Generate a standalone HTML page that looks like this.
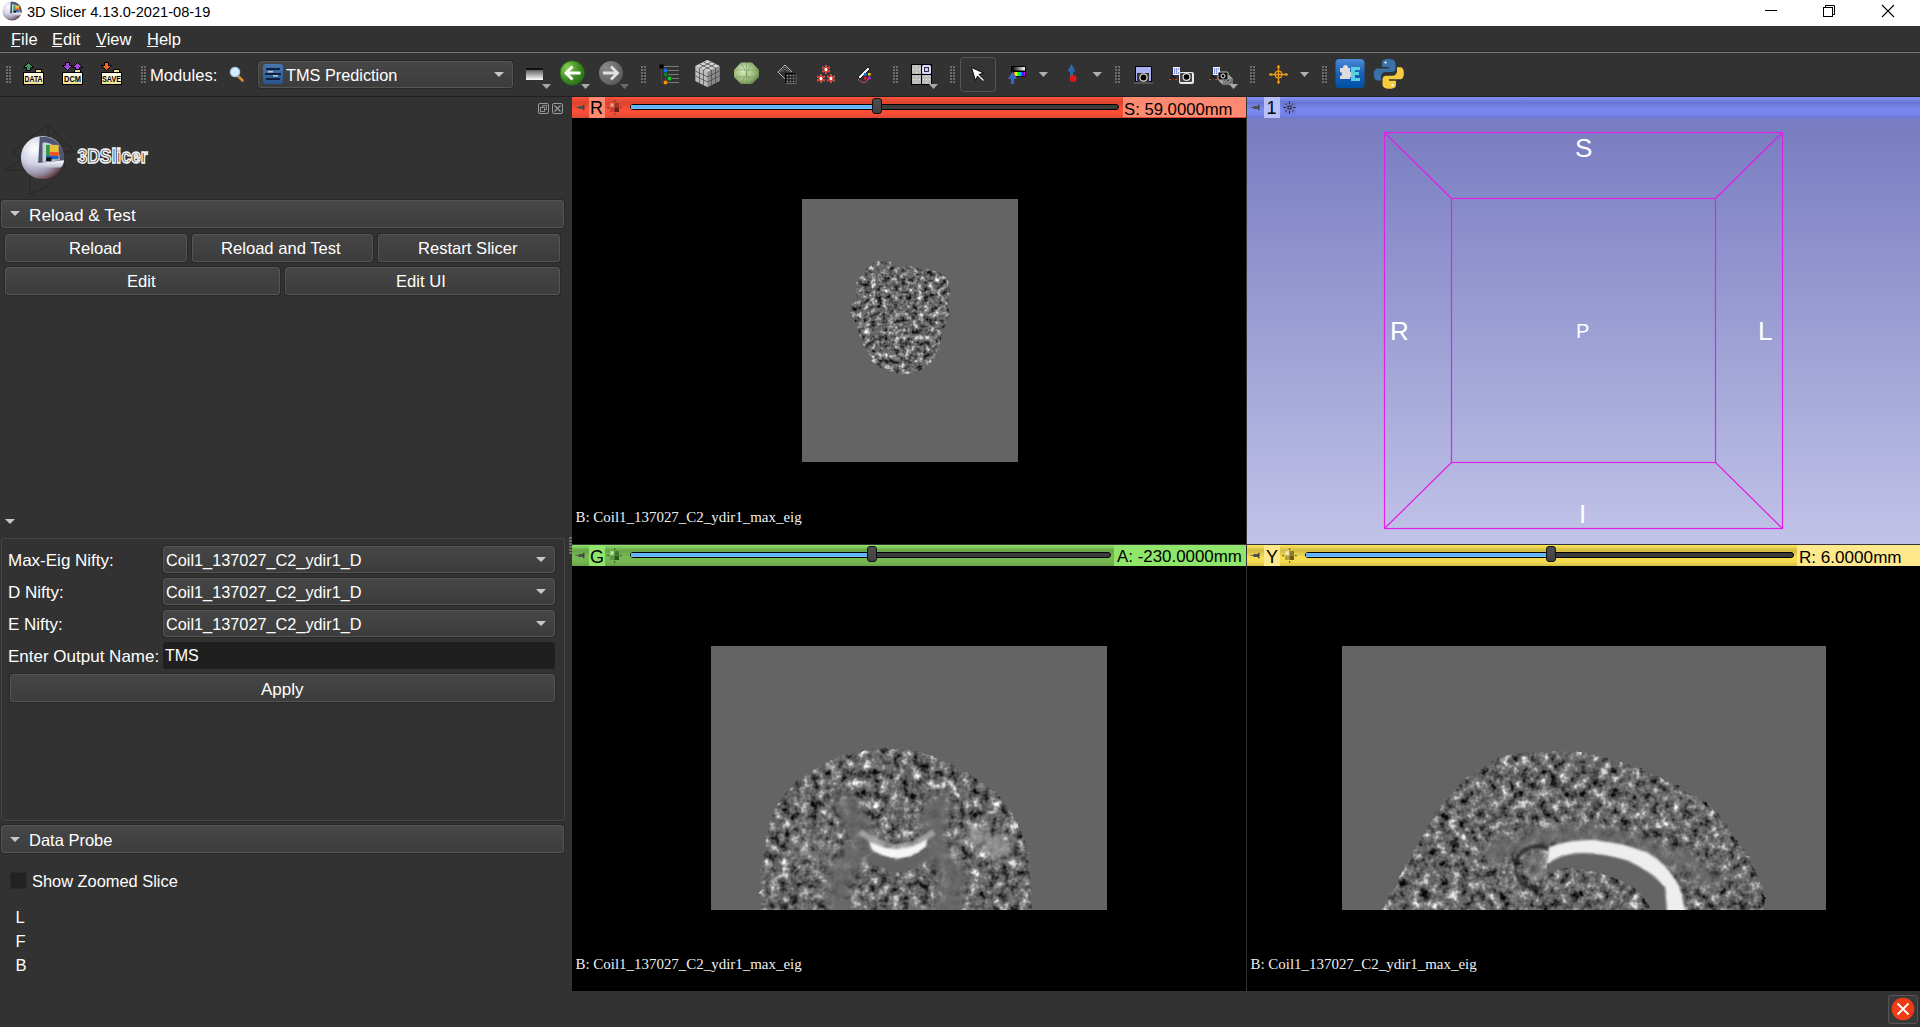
<!DOCTYPE html>
<html><head><meta charset="utf-8">
<style>
*{box-sizing:border-box;margin:0;padding:0}
html,body{width:1920px;height:1027px;overflow:hidden;background:#323232;font-family:"Liberation Sans",sans-serif;color:#fff}
.a{position:absolute}
.t{position:absolute;white-space:pre;line-height:1}
#title{left:0;top:0;width:1920px;height:26px;background:#fff}
#menu{left:0;top:26px;width:1920px;height:26px;background:#323232}
#tbline{left:0;top:52px;width:1920px;height:1px;background:#7c7c7c;box-shadow:0 -1px 0 #282828}
#toolbar{left:0;top:53px;width:1920px;height:44px;background:#323232}
.grip{position:absolute;width:6px;height:17px;background-image:radial-gradient(circle,#6a6a6a 1px,transparent 1.3px);background-size:3px 3px}
.btn{position:absolute;border:1px solid #555;border-radius:3px;box-shadow:0 0 0 1px #282828;background:linear-gradient(#464646,#3c3c3c);color:#fff;font-size:16px;text-align:center}
.hdr{position:absolute;border:1px solid #555;border-radius:3px;box-shadow:0 0 0 1px #282828;background:linear-gradient(#474747,#3d3d3d)}
.combo{position:absolute;border:1px solid #555;border-radius:3px;box-shadow:0 0 0 1px #282828;background:linear-gradient(#464646,#3c3c3c)}
.tri{position:absolute;width:0;height:0;border-left:5px solid transparent;border-right:5px solid transparent;border-top:5px solid #c8c8c8}

.bar{position:absolute;height:21px}
.red{background:linear-gradient(#ff5339 0px,#dc4630 5px,#dd4731 7px,#ff4f38 12px,#fa4d37 17px,#d44a30 21px)}
.grn{background:linear-gradient(#90e66a 0px,#6ba74b 5px,#6ca94b 7px,#78ba53 12px,#76b652 17px,#68a34a 21px)}
.yel{background:linear-gradient(#fde65c 0px,#d6be46 5px,#d8c047 7px,#f6dd52 12px,#f3da50 17px,#d2bc47 21px)}
.blu{background:linear-gradient(#8294fa 0px,#6b77d6 5px,#6c79d8 7px,#7a89ef 12px,#7786ec 17px,#6a77d4 21px)}
.lbl{position:absolute;top:0;height:21px;width:16px}
.trk{position:absolute;top:7px;height:6px;border:1px solid #000;border-radius:3px;background:#3c3c3c}
.fill{position:absolute;top:8px;height:4px;background:linear-gradient(#68bcff,#5aaef8 60%,#86ccff)}
.hdl{position:absolute;top:1px;width:10px;height:16px;border:1px solid #111;border-radius:3px;background:linear-gradient(#505050,#404040)}
.val{position:absolute;color:#000;font-size:16.4px}
.vt{position:absolute;white-space:pre;line-height:1;font-family:"Liberation Serif",serif;font-size:14.8px;color:#f0f0f0}
.gray{position:absolute;background:#646464}
.ser{font-family:"Liberation Serif",serif}
</style></head><body>
<!-- title bar -->
<div id="title" class="a"></div>

<svg width="0" height="0" style="position:absolute">
<defs>
<radialGradient id="sg" cx="0.32" cy="0.3" r="0.78"><stop offset="0" stop-color="#ffffff"/><stop offset="0.45" stop-color="#d0d2e6"/><stop offset="0.75" stop-color="#9a92a8"/><stop offset="1" stop-color="#5a3434"/></radialGradient>
<linearGradient id="plate" x1="0" y1="0" x2="0" y2="1"><stop offset="0" stop-color="#ffffff"/><stop offset="1" stop-color="#b8bcd0"/></linearGradient>
<symbol id="sph3d" viewBox="0 0 100 100">
<circle cx="50" cy="50" r="48" fill="url(#sg)"/>
<path d="M44 4A48 48 0 0 1 98 50L98 60L40 66Z" fill="#4e5674"/>
<path d="M54 16A36 36 0 0 1 88 50V56L50 60V18Z" fill="#c8d0dc"/>
<path d="M58 22H86V54H58Z" fill="#e8c040"/>
<path d="M58 22H66V54H58Z" fill="#2a9a4a"/>
<path d="M66 38H86V46H66Z" fill="#f05020"/>
<path d="M58 46H86V54H58Z" fill="#1a60c0"/>
<path d="M58 50H70V58H58Z" fill="#111"/>
<path d="M40 62L98 56Q96 70 90 72L38 72Z" fill="url(#plate)"/>
</symbol>
</defs>
</svg>
<svg class="a" style="left:2px;top:1px" width="20" height="20"><use href="#sph3d"/></svg>
<div class="t" style="left:27px;top:5px;font-size:14.6px;color:#000">3D Slicer 4.13.0-2021-08-19</div>
<div class="a" style="left:1765px;top:10px;width:12px;height:1px;background:#000"></div>
<svg class="a" style="left:1820px;top:3px" width="18" height="18"><rect x="3.5" y="4.5" width="9" height="9" fill="none" stroke="#000"/><path d="M5.5 4.5V2.5h9v9h-2" fill="none" stroke="#000"/></svg>
<svg class="a" style="left:1880px;top:3px" width="16" height="16"><path d="M2 2L14 14M14 2L2 14" stroke="#000" stroke-width="1.1"/></svg>
<!-- menu -->
<div id="menu" class="a"></div>
<div class="t" style="left:11px;top:31px;font-size:16.5px">File</div>
<div class="t" style="left:52px;top:31px;font-size:16.5px">Edit</div>
<div class="t" style="left:96px;top:31px;font-size:16.5px">View</div>
<div class="t" style="left:147px;top:31px;font-size:16.5px">Help</div>
<div class="a" style="left:11px;top:46px;width:9px;height:1px;background:#fff"></div>
<div class="a" style="left:52px;top:46px;width:10px;height:1px;background:#fff"></div>
<div class="a" style="left:96px;top:46px;width:10px;height:1px;background:#fff"></div>
<div class="a" style="left:147px;top:46px;width:11px;height:1px;background:#fff"></div>
<div id="tbline" class="a"></div>
<div id="toolbar" class="a"></div>
<div class="a" style="left:0;top:96px;width:1920px;height:1px;background:#202020"></div>
<!--TOOLBAR-->

<div class="t" style="left:150px;top:67.5px;font-size:16.6px">Modules:</div>
<div class="combo" style="left:258px;top:61px;width:255px;height:27px"></div>
<svg class="a" style="left:263px;top:64px" width="20" height="20"><defs><linearGradient id="cmb" x1="0" y1="0" x2="0" y2="1"><stop offset="0" stop-color="#4676ae"/><stop offset="1" stop-color="#28558e"/></linearGradient></defs><rect width="20" height="20" rx="3" fill="url(#cmb)"/>
<g fill="#10203a"><rect x="3" y="4" width="14" height="2"/><rect x="2" y="9" width="16" height="2"/><rect x="3" y="14" width="14" height="2"/></g>
<g fill="#c8e8f0" opacity="0.8"><rect x="5" y="7" width="5" height="1.5"/><rect x="10" y="11" width="5" height="1.5"/></g></svg>
<div class="t" style="left:286px;top:67px;font-size:16.3px">TMS Prediction</div>
<div class="tri" style="left:494px;top:72px"></div>
<svg class="a" style="left:0;top:0" width="1420" height="97" viewBox="0 0 1420 97">
<defs>
<pattern id="grip" x="0" y="66" width="3" height="3" patternUnits="userSpaceOnUse"><rect width="2" height="2" fill="#6c6c6c"/></pattern>
<linearGradient id="fold" x1="0" y1="0" x2="0" y2="1"><stop offset="0" stop-color="#fffde8"/><stop offset="0.6" stop-color="#fbf2c8"/><stop offset="1" stop-color="#eed880"/></linearGradient>
<radialGradient id="grn" cx="0.3" cy="0.3" r="0.8"><stop offset="0" stop-color="#8cd050"/><stop offset="0.6" stop-color="#3f8a24"/><stop offset="1" stop-color="#2d6e18"/></radialGradient>
<radialGradient id="gry" cx="0.3" cy="0.3" r="0.8"><stop offset="0" stop-color="#9a9a9a"/><stop offset="1" stop-color="#5e5e5e"/></radialGradient>
<linearGradient id="ext" x1="0" y1="0" x2="0" y2="1"><stop offset="0" stop-color="#4a8ad8"/><stop offset="0.5" stop-color="#1a62b8"/><stop offset="1" stop-color="#0050a4"/></linearGradient>
<linearGradient id="gbar" x1="0" y1="0" x2="0" y2="1"><stop offset="0" stop-color="#111"/><stop offset="0.15" stop-color="#111"/><stop offset="0.2" stop-color="#666"/><stop offset="1" stop-color="#fff"/></linearGradient>
<radialGradient id="sph" cx="0.4" cy="0.4" r="0.7"><stop offset="0" stop-color="#d8f0c0"/><stop offset="0.7" stop-color="#8fb070"/><stop offset="1" stop-color="#5f7a48"/></radialGradient>
<radialGradient id="cube" cx="0.5" cy="0.4" r="0.7"><stop offset="0" stop-color="#e8e8e8"/><stop offset="1" stop-color="#707070"/></radialGradient>
</defs>
<!-- grips -->

<g fill="#6c6c6c" id="grips"><rect x="6" y="66" width="2" height="2"/><rect x="9" y="66" width="2" height="2"/><rect x="6" y="69" width="2" height="2"/><rect x="9" y="69" width="2" height="2"/><rect x="6" y="72" width="2" height="2"/><rect x="9" y="72" width="2" height="2"/><rect x="6" y="75" width="2" height="2"/><rect x="9" y="75" width="2" height="2"/><rect x="6" y="78" width="2" height="2"/><rect x="9" y="78" width="2" height="2"/><rect x="6" y="81" width="2" height="2"/><rect x="9" y="81" width="2" height="2"/><rect x="141" y="66" width="2" height="2"/><rect x="144" y="66" width="2" height="2"/><rect x="141" y="69" width="2" height="2"/><rect x="144" y="69" width="2" height="2"/><rect x="141" y="72" width="2" height="2"/><rect x="144" y="72" width="2" height="2"/><rect x="141" y="75" width="2" height="2"/><rect x="144" y="75" width="2" height="2"/><rect x="141" y="78" width="2" height="2"/><rect x="144" y="78" width="2" height="2"/><rect x="141" y="81" width="2" height="2"/><rect x="144" y="81" width="2" height="2"/><rect x="641" y="66" width="2" height="2"/><rect x="644" y="66" width="2" height="2"/><rect x="641" y="69" width="2" height="2"/><rect x="644" y="69" width="2" height="2"/><rect x="641" y="72" width="2" height="2"/><rect x="644" y="72" width="2" height="2"/><rect x="641" y="75" width="2" height="2"/><rect x="644" y="75" width="2" height="2"/><rect x="641" y="78" width="2" height="2"/><rect x="644" y="78" width="2" height="2"/><rect x="641" y="81" width="2" height="2"/><rect x="644" y="81" width="2" height="2"/><rect x="893" y="66" width="2" height="2"/><rect x="896" y="66" width="2" height="2"/><rect x="893" y="69" width="2" height="2"/><rect x="896" y="69" width="2" height="2"/><rect x="893" y="72" width="2" height="2"/><rect x="896" y="72" width="2" height="2"/><rect x="893" y="75" width="2" height="2"/><rect x="896" y="75" width="2" height="2"/><rect x="893" y="78" width="2" height="2"/><rect x="896" y="78" width="2" height="2"/><rect x="893" y="81" width="2" height="2"/><rect x="896" y="81" width="2" height="2"/><rect x="950" y="66" width="2" height="2"/><rect x="953" y="66" width="2" height="2"/><rect x="950" y="69" width="2" height="2"/><rect x="953" y="69" width="2" height="2"/><rect x="950" y="72" width="2" height="2"/><rect x="953" y="72" width="2" height="2"/><rect x="950" y="75" width="2" height="2"/><rect x="953" y="75" width="2" height="2"/><rect x="950" y="78" width="2" height="2"/><rect x="953" y="78" width="2" height="2"/><rect x="950" y="81" width="2" height="2"/><rect x="953" y="81" width="2" height="2"/><rect x="1115" y="66" width="2" height="2"/><rect x="1118" y="66" width="2" height="2"/><rect x="1115" y="69" width="2" height="2"/><rect x="1118" y="69" width="2" height="2"/><rect x="1115" y="72" width="2" height="2"/><rect x="1118" y="72" width="2" height="2"/><rect x="1115" y="75" width="2" height="2"/><rect x="1118" y="75" width="2" height="2"/><rect x="1115" y="78" width="2" height="2"/><rect x="1118" y="78" width="2" height="2"/><rect x="1115" y="81" width="2" height="2"/><rect x="1118" y="81" width="2" height="2"/><rect x="1250" y="66" width="2" height="2"/><rect x="1253" y="66" width="2" height="2"/><rect x="1250" y="69" width="2" height="2"/><rect x="1253" y="69" width="2" height="2"/><rect x="1250" y="72" width="2" height="2"/><rect x="1253" y="72" width="2" height="2"/><rect x="1250" y="75" width="2" height="2"/><rect x="1253" y="75" width="2" height="2"/><rect x="1250" y="78" width="2" height="2"/><rect x="1253" y="78" width="2" height="2"/><rect x="1250" y="81" width="2" height="2"/><rect x="1253" y="81" width="2" height="2"/><rect x="1322" y="66" width="2" height="2"/><rect x="1325" y="66" width="2" height="2"/><rect x="1322" y="69" width="2" height="2"/><rect x="1325" y="69" width="2" height="2"/><rect x="1322" y="72" width="2" height="2"/><rect x="1325" y="72" width="2" height="2"/><rect x="1322" y="75" width="2" height="2"/><rect x="1325" y="75" width="2" height="2"/><rect x="1322" y="78" width="2" height="2"/><rect x="1325" y="78" width="2" height="2"/><rect x="1322" y="81" width="2" height="2"/><rect x="1325" y="81" width="2" height="2"/></g>
<!-- DATA -->
<g stroke="#000" stroke-width="1">
<path d="M28.5 62.5L23.5 67.5H26.5V70.5H30.5V67.5H33.5Z" fill="#3a9a5a"/>
<path d="M35.5 72.5V69.5H41.5V72.5" fill="#f2e2a0"/>
<rect x="23.5" y="72.5" width="20" height="12" fill="url(#fold)"/>
</g>
<text x="24.5" y="82" font-family="Liberation Sans" font-weight="bold" font-size="9" fill="#000" textLength="18" lengthAdjust="spacingAndGlyphs">DATA</text>
<!-- DCM -->
<g stroke="#000" stroke-width="1">
<path d="M67.5 70.5L62.5 65.5H65.5V62.5H69.5V65.5H72.5Z" fill="#a648d8"/>
<path d="M77.5 62.5L72.5 67.5H75.5V70.5H79.5V67.5H82.5Z" fill="#a648d8"/>
<path d="M74.5 72.5V69.5H80.5V72.5" fill="#f2e2a0"/>
<rect x="62.5" y="72.5" width="20" height="12" fill="url(#fold)"/>
</g>
<text x="64" y="82" font-family="Liberation Sans" font-weight="bold" font-size="9" fill="#000" textLength="17" lengthAdjust="spacingAndGlyphs">DCM</text>
<!-- SAVE -->
<g stroke="#000" stroke-width="1">
<path d="M106.5 70.5L101.5 65.5H104.5V62.5H108.5V65.5H111.5Z" fill="#ee6420"/>
<path d="M113.5 72.5V69.5H119.5V72.5" fill="#f2e2a0"/>
<rect x="101.5" y="72.5" width="20" height="12" fill="url(#fold)"/>
</g>
<text x="102" y="82" font-family="Liberation Sans" font-weight="bold" font-size="9" fill="#000" textLength="19" lengthAdjust="spacingAndGlyphs">SAVE</text>
<!-- magnifier -->
<path d="M238.5 76.5L242.5 80.5" stroke="#d08a3a" stroke-width="2.6" stroke-linecap="round"/>
<circle cx="235" cy="72" r="4.6" fill="#d8ecff" stroke="#9cc8f0" stroke-width="1.4"/>
<!-- gradient bars icon -->
<rect x="526" y="68" width="17" height="12" fill="url(#gbar)"/>
<path d="M542 84H551L546.5 89Z" fill="#a8a8a8"/>
<!-- green back -->
<circle cx="572.3" cy="73" r="12.3" fill="url(#grn)" stroke="#1f5a10" stroke-width="0.8"/>
<path d="M564 73L571.5 65.5L573.5 67.5L569.5 71.5H580.5V74.5H569.5L573.5 78.5L571.5 80.5Z" fill="#fff"/>
<path d="M581 84H590L585.5 89Z" fill="#a8a8a8"/>
<!-- gray forward -->
<circle cx="611" cy="73" r="12" fill="url(#gry)" opacity="0.85"/>
<path d="M619.5 73L612 65.5L610 67.5L614 71.5H603V74.5H614L610 78.5L612 80.5Z" fill="#e0e0e0"/>
<path d="M620 84H629L624.5 89Z" fill="#6a6a6a"/>
<!-- data tree -->
<g stroke="#7a7a7a" stroke-width="1">
<path d="M664 66.5H679M668 70.5H679M668 74.5H679M672 78.5H679M668 82.5H679"/>
<path d="M661.5 68V83M665.5 77V80" stroke="#444"/>
</g>
<rect x="660" y="65" width="3" height="3" fill="#000" stroke="#000"/>
<rect x="664" y="69" width="3" height="3" fill="#1478f0" stroke="#1a6ee0" stroke-width="0.6"/>
<rect x="664" y="73" width="3" height="3" fill="#0a8a1a" stroke="#0a7a14" stroke-width="0.6"/>
<rect x="668" y="77" width="3" height="3" fill="#18d028" stroke="#10b020" stroke-width="0.6"/>
<rect x="664" y="81" width="3" height="3" fill="#ff9a10" stroke="#f08a00" stroke-width="0.6"/>
<!-- cube -->
<g>
<path d="M707.5 60L719.5 66V81L707.5 87L695.5 81V66Z" fill="#9a9a9a"/>
<path d="M707.5 60L719.5 66L707.5 72L695.5 66Z" fill="#d0d0d0"/>
<path d="M695.5 66L707.5 72V87L695.5 81Z" fill="#bcbcbc"/>
<path d="M707.5 72L719.5 66V81L707.5 87Z" fill="#8a8a8a"/>
<g stroke="#444" stroke-width="0.7" fill="none">
<path d="M699.5 64L711.5 70M703.5 62L715.5 68M711.5 62L699.5 68M715.5 64L703.5 70"/>
<path d="M699.5 68V83M703.5 70V85M711.5 70V85M715.5 68V83"/>
<path d="M695.5 71L707.5 77L719.5 71M695.5 76L707.5 82L719.5 76"/>
</g>
</g>
<!-- green sphere -->
<path d="M741 62.6H752L759 70V77L752 84H741L734 77V70Z" fill="url(#sph)"/>
<g stroke="#6a8a50" stroke-width="0.6" fill="none" opacity="0.8"><path d="M734 70H759M734 77H759M741 62.6L752 84M752 62.6L741 84M746.5 62.6V84"/></g>
<!-- volumes -->
<g fill="none" stroke="#c8c8c8" stroke-width="0.9">
<path d="M778 72L785 65L792 72"/>
<path d="M780 72L785 67L790 72M782 72L785 69L788 72" stroke="#888" stroke-width="0.6"/>
<path d="M778 72L785 79" />
</g>
<rect x="785" y="73" width="10.5" height="10" fill="#000"/>
<path d="M786 83.5H796V74" stroke="#777" fill="none" stroke-width="0.8"/>
<g fill="#8a8a8a"><rect x="786.5" y="74.5" width="2" height="2"/><rect x="789.5" y="74.5" width="2" height="2"/><rect x="792.5" y="74.5" width="2" height="2"/><rect x="786.5" y="77.5" width="2" height="2"/><rect x="789.5" y="77.5" width="2" height="2"/><rect x="792.5" y="77.5" width="2" height="2"/><rect x="786.5" y="80.5" width="2" height="2"/><rect x="789.5" y="80.5" width="2" height="2"/><rect x="792.5" y="80.5" width="2" height="2"/></g>
<!-- markups -->
<g stroke-width="1.6" stroke-linecap="butt">
<g id="ast1" transform="translate(826,69.5)"><path d="M0 -4V4M-3.6 -2.2L3.6 2.2M-3.6 2.2L3.6 -2.2" stroke="#fff"/><path d="M0 -4V-1.5M0 1.5V4M-3.6 -2.2L-1.3 -0.8M1.3 0.8L3.6 2.2M-3.6 2.2L-1.3 0.8M1.3 -0.8L3.6 -2.2" stroke="#e02010"/></g>
<g transform="translate(821,78.5)"><path d="M0 -4V4M-3.6 -2.2L3.6 2.2M-3.6 2.2L3.6 -2.2" stroke="#fff"/><path d="M0 -4V-1.5M0 1.5V4M-3.6 -2.2L-1.3 -0.8M1.3 0.8L3.6 2.2M-3.6 2.2L-1.3 0.8M1.3 -0.8L3.6 -2.2" stroke="#e02010"/></g>
<g transform="translate(831,78.5)"><path d="M0 -4V4M-3.6 -2.2L3.6 2.2M-3.6 2.2L3.6 -2.2" stroke="#fff"/><path d="M0 -4V-1.5M0 1.5V4M-3.6 -2.2L-1.3 -0.8M1.3 0.8L3.6 2.2M-3.6 2.2L-1.3 0.8M1.3 -0.8L3.6 -2.2" stroke="#e02010"/></g>
</g>
<!-- editor -->
<path d="M858 77L868 67L870 69L860 79Z" fill="#f0f0f0" stroke="#000" stroke-width="0.8"/>
<path d="M858 79Q862 84 866 82L868 79" fill="none" stroke="#e05080" stroke-width="0.8"/>
<rect x="864" y="73" width="2.6" height="2.6" fill="#1a70e0"/><rect x="868" y="73" width="2.6" height="2.6" fill="#f0c000"/>
<rect x="864" y="77" width="2.6" height="2.6" fill="#e02020"/><rect x="868" y="77" width="2.6" height="2.6" fill="#c020e0"/>
<!-- layout -->
<rect x="911" y="64" width="21" height="21" fill="#000"/>
<rect x="912" y="65" width="9" height="9" fill="#bdbdbd"/><rect x="922" y="65" width="9" height="9" rx="1.5" fill="#d8d8ff"/>
<rect x="912" y="75" width="9" height="9" fill="#bdbdbd"/><rect x="922" y="75" width="9" height="9" fill="#bdbdbd"/>
<rect x="924.5" y="67.5" width="4" height="4" fill="#c8c8f0" stroke="#222" stroke-width="0.9"/>
<g fill="#f0f0c0"><rect x="916" y="66" width="1" height="1"/><rect x="916" y="69" width="1" height="1"/><rect x="913" y="69" width="1" height="1"/><rect x="919" y="69" width="1" height="1"/><rect x="916" y="72" width="1" height="1"/><rect x="916" y="76" width="1" height="1"/><rect x="916" y="79" width="1" height="1"/><rect x="913" y="79" width="1" height="1"/><rect x="919" y="79" width="1" height="1"/><rect x="916" y="82" width="1" height="1"/><rect x="926" y="76" width="1" height="1"/><rect x="926" y="79" width="1" height="1"/><rect x="923" y="79" width="1" height="1"/><rect x="929" y="79" width="1" height="1"/><rect x="926" y="82" width="1" height="1"/></g>
<path d="M929 84H938L933.5 89Z" fill="#a8a8a8"/>
<!-- pointer -->
<rect x="960.5" y="57.5" width="35" height="34" rx="3" fill="#343434" stroke="#555"/>
<path d="M971.5 67.5L983.5 73L979 74.5L984.5 80L983 81.5L977.5 76L975.5 80.5Z" fill="#fff" stroke="#000" stroke-width="0.9"/>
<!-- window level -->
<rect x="1011" y="66" width="15" height="10.6" fill="#000"/>
<defs><linearGradient id="wl" x1="0" x2="1"><stop offset="0" stop-color="#000"/><stop offset="1" stop-color="#fff"/></linearGradient>
<linearGradient id="rb" x1="0" x2="1"><stop offset="0" stop-color="#ff8000"/><stop offset="0.2" stop-color="#ffff00"/><stop offset="0.4" stop-color="#00ff00"/><stop offset="0.6" stop-color="#00c0ff"/><stop offset="0.8" stop-color="#4000ff"/><stop offset="1" stop-color="#ff00ff"/></linearGradient></defs>
<rect x="1012" y="67" width="13" height="3.5" fill="url(#wl)"/>
<rect x="1014" y="72" width="11" height="4" fill="url(#rb)"/>
<path d="M1012.5 71L1008 79H1010.9V84H1014.1V79H1017Z" fill="#3a64c0"/>
<path d="M1038.75 72H1048L1043.4 77Z" fill="#b0b0b0"/>
<!-- pick -->
<path d="M1071.5 64L1067.5 71.5H1070V77H1073V71.5H1075.5Z" fill="#2a6aa8"/>
<circle cx="1073" cy="78.5" r="3.5" fill="#e01818"/>
<path d="M1092.5 72H1102L1097.2 77Z" fill="#b0b0b0"/>
<!-- screenshot -->
<rect x="1135" y="66" width="17" height="16" fill="#000"/>
<rect x="1136" y="67" width="15" height="14" fill="#aab0f2"/>
<rect x="1134" y="82" width="19" height="2" fill="#555"/>
<path d="M1137 73H1149V82H1137Z" fill="#333"/>
<circle cx="1143.5" cy="77.5" r="3.6" fill="#000" stroke="#ddd" stroke-width="1.3"/>
<!-- scene view -->
<rect x="1173" y="67" width="7" height="8" fill="#f0f0ff"/>
<g fill="#4060e0"><rect x="1174" y="68.5" width="1.2" height="1.2"/><rect x="1176" y="68.5" width="1.2" height="1.2"/><rect x="1178" y="68.5" width="1.2" height="1.2"/><rect x="1174" y="70.5" width="1.2" height="1.2"/><rect x="1176" y="70.5" width="1.2" height="1.2"/><rect x="1174" y="72.5" width="1.2" height="1.2"/><rect x="1176" y="72.5" width="1.2" height="1.2"/><rect x="1178" y="72.5" width="1.2" height="1.2"/></g>
<path d="M1169 79.5H1171M1175 79.5H1177" stroke="#e04010" stroke-width="1.2"/>
<path d="M1170 79L1173 75.5L1176 79" stroke="#000" fill="none" stroke-width="0.8"/>
<rect x="1179" y="72" width="15" height="12" rx="2" fill="#e8e8e8"/>
<rect x="1180" y="73" width="12" height="9" rx="1" fill="#444"/>
<circle cx="1186.5" cy="77" r="3.4" fill="#000" stroke="#ddd" stroke-width="1.2"/>
<!-- multi scene -->
<rect x="1213" y="67" width="7" height="8" fill="#f0f0ff"/>
<g fill="#4060e0"><rect x="1214" y="68.5" width="1.2" height="1.2"/><rect x="1216" y="68.5" width="1.2" height="1.2"/><rect x="1218" y="68.5" width="1.2" height="1.2"/><rect x="1214" y="70.5" width="1.2" height="1.2"/><rect x="1216" y="70.5" width="1.2" height="1.2"/><rect x="1214" y="72.5" width="1.2" height="1.2"/><rect x="1216" y="72.5" width="1.2" height="1.2"/></g>
<path d="M1209 79.5H1211M1215 79.5H1217" stroke="#e04010" stroke-width="1.2"/>
<path d="M1210 79L1213 75.5L1216 79" stroke="#000" fill="none" stroke-width="0.8"/>
<path d="M1222 78H1232V84H1222Z" fill="none" stroke="#bbb" stroke-width="1"/>
<path d="M1220 76H1230V82H1220Z" fill="none" stroke="#ccc" stroke-width="1"/>
<rect x="1218" y="72" width="10" height="8" rx="1" fill="#111" stroke="#ddd" stroke-width="0.8"/>
<circle cx="1223" cy="76" r="2" fill="#000" stroke="#eee" stroke-width="1"/>
<path d="M1229 84H1238L1233.5 89Z" fill="#a8a8a8"/>
<!-- crosshair -->
<g stroke="#f09a10" stroke-width="1.3" fill="none">
<path d="M1269 74.5H1288M1278.5 65V84"/>
<circle cx="1278.5" cy="74.5" r="3.4"/>
<path d="M1271 73V76M1286 73V76M1277 67H1280M1277 82H1280"/>
</g>
<path d="M1300 72H1309L1304.5 77Z" fill="#b0b0b0"/>
<!-- extensions -->
<rect x="1335.5" y="59" width="29" height="29" rx="4" fill="url(#ext)"/>
<path d="M1340 68H1343Q1343 65 1345.5 65Q1348 65 1348 68H1350V72Q1352.5 72 1352.5 74.5Q1352.5 77 1350 77V79H1340V76Q1342 76 1342 74Q1342 72 1340 72Z" fill="#dcdcdc"/>
<path d="M1351 67H1360V70H1355V72H1359V75H1355V78H1360V81H1351Z" fill="#5ad0e0"/>
<!-- python -->
<path d="M1388.5 59C1382 59 1382 61.5 1382 64V67H1389V68.5H1378C1375 68.5 1373.8 71 1373.8 74.5C1373.8 78 1375 80.5 1378 80.5H1381V76.5C1381 74 1383 72 1385.5 72H1392C1394 72 1395.5 70.5 1395.5 68.5V63.5C1395.5 61 1393.5 59 1388.5 59Z" fill="#3a72a8"/>
<path d="M1389.5 88.7C1396 88.7 1396 86.2 1396 83.7V80.7H1389V79.2H1400C1403 79.2 1403.8 76.7 1403.8 73.2C1403.8 69.7 1403 67.2 1400 67.2H1397V71.2C1397 73.7 1395 75.7 1392.5 75.7H1386C1384 75.7 1382.5 77.2 1382.5 79.2V84.2C1382.5 86.7 1384.5 88.7 1389.5 88.7Z" fill="#f6cc3e"/>
<circle cx="1385.5" cy="62.5" r="1.1" fill="#fff"/><circle cx="1392.5" cy="85.2" r="1.1" fill="#fff"/>
</svg>

<!--/TOOLBAR-->

<!-- left panel -->
<div class="a" id="leftpanel" style="left:0;top:97px;width:572px;height:894px;background:#323232"></div>

<svg class="a" style="left:0;top:97px" width="572" height="100" viewBox="0 97 572 100">
<g stroke="#262626" stroke-width="1" fill="none"><path d="M48 124L48 142M48 124L30 138L12 152L22 160L5 170L30 170L30 194L47 187L65 169L63 152L76 152L62 140L48 124"/></g>
<use href="#sph3d" x="20" y="135" width="45" height="45"/>
<text x="77.5" y="163" font-family="Liberation Sans" font-weight="bold" font-size="19.5" fill="#383838" stroke="#f4f4f4" stroke-width="1.5" textLength="70" lengthAdjust="spacingAndGlyphs">3DSlicer</text>
<g fill="none" stroke="#9a9a9a" stroke-width="1"><rect x="538.5" y="103.5" width="10" height="10" rx="1.5"/><rect x="552.5" y="103.5" width="10" height="10" rx="1.5"/><path d="M542.5 107.5V105.5H546.5V109.5H544.5" stroke-width="0.9"/><rect x="540.5" y="107.5" width="4" height="4" stroke-width="0.9"/><path d="M554.5 105.5L560.5 111.5M560.5 105.5L554.5 111.5" stroke-width="1.3"/></g>
</svg>
<div class="a" style="left:569px;top:537px;width:3px;height:17px;background-image:linear-gradient(#6a6a6a 2px,transparent 2px);background-size:3px 3px"></div>
<div class="hdr" style="left:1px;top:200px;width:563px;height:28px"></div>
<div class="tri" style="left:10px;top:211px"></div>
<div class="t" style="left:29px;top:207px;font-size:17.2px">Reload &amp; Test</div>
<div class="btn" style="left:5px;top:234px;width:182px;height:28px"></div>
<div class="btn" style="left:192px;top:234px;width:181px;height:28px"></div>
<div class="btn" style="left:378px;top:234px;width:182px;height:28px"></div>
<div class="btn" style="left:5px;top:267px;width:275px;height:28px"></div>
<div class="btn" style="left:285px;top:267px;width:275px;height:28px"></div>


<!-- left panel contents -->
<div class="t" style="left:69px;top:241px;font-size:16.6px">Reload</div>
<div class="t" style="left:221px;top:241px;font-size:16.6px">Reload and Test</div>
<div class="t" style="left:418px;top:241px;font-size:16.6px">Restart Slicer</div>
<div class="t" style="left:127px;top:274px;font-size:16.6px">Edit</div>
<div class="t" style="left:396px;top:274px;font-size:16.6px">Edit UI</div>
<div class="tri" style="left:5px;top:519px"></div>
<div class="a" style="left:1px;top:538px;width:564px;height:283px;border:1px solid #464646;border-radius:3px;box-shadow:0 1px 0 #2a2a2a"></div>
<div class="t" style="left:8px;top:552px;font-size:17px">Max-Eig Nifty:</div>
<div class="t" style="left:8px;top:584px;font-size:17px">D Nifty:</div>
<div class="t" style="left:8px;top:616px;font-size:17px">E Nifty:</div>
<div class="t" style="left:8px;top:648px;font-size:17px">Enter Output Name:</div>
<div class="combo" style="left:163px;top:546px;width:392px;height:27px"></div>
<div class="combo" style="left:163px;top:578px;width:392px;height:27px"></div>
<div class="combo" style="left:163px;top:610px;width:392px;height:27px"></div>
<div class="t" style="left:166px;top:552px;font-size:16.3px">Coil1_137027_C2_ydir1_D</div>
<div class="t" style="left:166px;top:584px;font-size:16.3px">Coil1_137027_C2_ydir1_D</div>
<div class="t" style="left:166px;top:616px;font-size:16.3px">Coil1_137027_C2_ydir1_D</div>
<div class="tri" style="left:536px;top:557px"></div>
<div class="tri" style="left:536px;top:589px"></div>
<div class="tri" style="left:536px;top:621px"></div>
<div class="a" style="left:163px;top:642px;width:392px;height:27px;background:#1f1f1f;border-radius:3px"></div>
<div class="t" style="left:165px;top:648px;font-size:16px">TMS</div>
<div class="btn" style="left:10px;top:674px;width:545px;height:28px"></div>
<div class="t" style="left:261px;top:681px;font-size:17px">Apply</div>
<div class="hdr" style="left:1px;top:825px;width:563px;height:28px"></div>
<div class="tri" style="left:10px;top:837px"></div>
<div class="t" style="left:29px;top:832px;font-size:16.5px">Data Probe</div>
<div class="a" style="left:10px;top:872px;width:17px;height:17px;background:#222;border:1px solid #2a2a2a"></div>
<div class="t" style="left:32px;top:873px;font-size:16.4px">Show Zoomed Slice</div>
<div class="t" style="left:15.5px;top:910px;font-size:16.6px">L</div>
<div class="t" style="left:15.5px;top:934px;font-size:16.6px">F</div>
<div class="t" style="left:15.5px;top:958px;font-size:16.6px">B</div>

<!-- views -->
<div class="a" style="left:572px;top:97px;width:674px;height:447px;background:#000"></div>
<div class="a" style="left:1247px;top:97px;width:673px;height:447px;background:linear-gradient(#7478be,#c1c3e8)"></div>
<div class="a" style="left:572px;top:545px;width:674px;height:446px;background:#000"></div>
<div class="a" style="left:1247px;top:545px;width:673px;height:446px;background:#000"></div>
<div class="a" style="left:1246px;top:97px;width:1px;height:894px;background:#333"></div>
<div class="a" style="left:572px;top:544px;width:1348px;height:1px;background:#333"></div>


<!-- red view bar -->
<div class="bar red" style="left:572px;top:97px;width:674px"></div>
<div class="lbl" style="left:589px;top:97px;background:#ff8a72"></div>
<div class="t" style="left:590px;top:99px;font-size:18px;color:#000">R</div>
<div class="trk" style="left:630px;top:104px;width:489px"></div>
<div class="fill" style="left:631px;top:105px;width:242px"></div>
<div class="hdl" style="left:872px;top:98px"></div>
<div class="a" style="left:1123px;top:97px;width:123px;height:20px;background:#ff8a72"></div>
<div class="t val" style="left:1124px;top:101.5px;font-size:16.7px">S: 59.0000mm</div>
<!-- blue 3D bar -->
<div class="bar blu" style="left:1247px;top:97px;width:673px"></div>
<div class="lbl" style="left:1264px;top:97px;background:#b8c0fa"></div>
<div class="t" style="left:1266.5px;top:99px;font-size:18px;color:#000">1</div>
<!-- green bar -->
<div class="bar grn" style="left:572px;top:545px;width:674px"></div>
<div class="lbl" style="left:589px;top:545px;background:#8fe66a"></div>
<div class="t" style="left:590px;top:548px;font-size:18px;color:#000">G</div>
<div class="trk" style="left:630px;top:552px;width:481px"></div>
<div class="fill" style="left:631px;top:553px;width:237px"></div>
<div class="hdl" style="left:867px;top:546px"></div>
<div class="a" style="left:1114px;top:545px;width:132px;height:21px;background:#8fe66a"></div>
<div class="t val" style="left:1117px;top:549px;font-size:16.9px">A: -230.0000mm</div>
<!-- yellow bar -->
<div class="bar yel" style="left:1247px;top:545px;width:673px"></div>
<div class="lbl" style="left:1264px;top:545px;background:#fde98c"></div>
<div class="t" style="left:1266px;top:548px;font-size:18px;color:#000">Y</div>
<div class="trk" style="left:1305px;top:552px;width:489px"></div>
<div class="fill" style="left:1306px;top:553px;width:241px"></div>
<div class="hdl" style="left:1546px;top:546px"></div>
<div class="a" style="left:1797px;top:545px;width:123px;height:21px;background:#fde98c"></div>
<div class="t val" style="left:1799px;top:548.5px;font-size:17.1px">R: 6.0000mm</div>
<svg class="a" style="left:0;top:0" width="1920" height="600" viewBox="0 0 1920 600"><path d="M575.5 107.5H579.0" stroke="#4a4a4a" stroke-width="0.8"/><path d="M578.5 106.0H583.0V109.0H578.5Z" fill="#4e4e4e"/><path d="M583.0 104.7H584.5V110.3H583.0Z" fill="#444"/><rect x="610" y="103" width="4.5" height="4.5" fill="#e2705c"/><rect x="614.5" y="103" width="4.5" height="4.5" fill="#a8301e"/><rect x="610" y="107.5" width="4.5" height="4.5" fill="#c84030"/><rect x="614.5" y="107.5" width="4.5" height="4.5" fill="#701c12"/><rect x="611.2" y="104" width="2" height="2" fill="#fff" opacity="0.45"/><g fill="#222"><rect x="614" y="100.5" width="1.2" height="1.2"/><rect x="614" y="113.3" width="1.2" height="1.2"/><rect x="607.5" y="107" width="1.2" height="1.2"/><rect x="620.3" y="107" width="1.2" height="1.2"/></g><path d="M575.5 555.5H579.0" stroke="#4a4a4a" stroke-width="0.8"/><path d="M578.5 554.0H583.0V557.0H578.5Z" fill="#4e4e4e"/><path d="M583.0 552.7H584.5V558.3H583.0Z" fill="#444"/><rect x="610" y="551" width="4.5" height="4.5" fill="#9ad080"/><rect x="614.5" y="551" width="4.5" height="4.5" fill="#3e7a2a"/><rect x="610" y="555.5" width="4.5" height="4.5" fill="#5a9a40"/><rect x="614.5" y="555.5" width="4.5" height="4.5" fill="#2a5a1c"/><rect x="611.2" y="552" width="2" height="2" fill="#fff" opacity="0.45"/><g fill="#222"><rect x="614" y="548.5" width="1.2" height="1.2"/><rect x="614" y="561.3" width="1.2" height="1.2"/><rect x="607.5" y="555" width="1.2" height="1.2"/><rect x="620.3" y="555" width="1.2" height="1.2"/></g><path d="M1250.5 555.5H1254.0" stroke="#4a4a4a" stroke-width="0.8"/><path d="M1253.5 554.0H1258.0V557.0H1253.5Z" fill="#4e4e4e"/><path d="M1258.0 552.7H1259.5V558.3H1258.0Z" fill="#444"/><rect x="1285" y="551" width="4.5" height="4.5" fill="#e8dca0"/><rect x="1289.5" y="551" width="4.5" height="4.5" fill="#8a7a30"/><rect x="1285" y="555.5" width="4.5" height="4.5" fill="#b0a040"/><rect x="1289.5" y="555.5" width="4.5" height="4.5" fill="#6a5a20"/><rect x="1286.2" y="552" width="2" height="2" fill="#fff" opacity="0.45"/><g fill="#222"><rect x="1289" y="548.5" width="1.2" height="1.2"/><rect x="1289" y="561.3" width="1.2" height="1.2"/><rect x="1282.5" y="555" width="1.2" height="1.2"/><rect x="1295.3" y="555" width="1.2" height="1.2"/></g><path d="M1250.5 107.5H1254.0" stroke="#4a4a4a" stroke-width="0.8"/><path d="M1253.5 106.0H1258.0V109.0H1253.5Z" fill="#4e4e4e"/><path d="M1258.0 104.7H1259.5V110.3H1258.0Z" fill="#444"/><rect x="1283" y="101" width="13" height="13" fill="#6c76cc" opacity="0.6"/>
<g stroke="#222" stroke-width="1" fill="none"><path d="M1289.5 101.5V104M1289.5 111V113.5M1283.5 107.5H1286M1293 107.5H1295.5"/><rect x="1288" y="106" width="3" height="3"/></g>
<g fill="#222"><rect x="1285.5" y="103.5" width="1.2" height="1.2"/><rect x="1292.3" y="103.5" width="1.2" height="1.2"/><rect x="1285.5" y="110.3" width="1.2" height="1.2"/><rect x="1292.3" y="110.3" width="1.2" height="1.2"/></g></svg>
<!-- slice grays -->
<div class="gray" style="left:802px;top:199px;width:216px;height:263px"></div>
<div class="gray" style="left:711px;top:646px;width:396px;height:264px"></div>
<div class="gray" style="left:1342px;top:646px;width:484px;height:264px"></div>

<!-- brains -->
<svg class="a" style="left:572px;top:97px" width="1348" height="894" viewBox="572 97 1348 894">
<defs>
<filter id="nr" x="830" y="240" width="140" height="150" filterUnits="userSpaceOnUse" color-interpolation-filters="sRGB">
<feTurbulence type="fractalNoise" baseFrequency="0.17" numOctaves="2" seed="11" result="a0"/>
<feColorMatrix in="a0" type="matrix" values="1 0 0 0 0  1 0 0 0 0  1 0 0 0 0  0 0 0 0 1" result="a"/>
<feTurbulence type="fractalNoise" baseFrequency="0.5" numOctaves="1" seed="12" result="b0"/>
<feColorMatrix in="b0" type="matrix" values="1 0 0 0 0  1 0 0 0 0  1 0 0 0 0  0 0 0 0 1" result="b"/>
<feComposite in="a" in2="b" operator="arithmetic" k1="0" k2="1.2" k3="0.45" k4="-0.425" result="g1"/>
<feComponentTransfer in="g1" result="g"><feFuncR type="table" tableValues="0.03 0.13 0.25 0.35 0.41 0.48 0.6 0.76 0.9 1 1"/><feFuncG type="table" tableValues="0.03 0.13 0.25 0.35 0.41 0.48 0.6 0.76 0.9 1 1"/><feFuncB type="table" tableValues="0.03 0.13 0.25 0.35 0.41 0.48 0.6 0.76 0.9 1 1"/></feComponentTransfer>
<feGaussianBlur in="SourceAlpha" stdDeviation="2.5" result="bl"/>
<feTurbulence type="fractalNoise" baseFrequency="0.25" numOctaves="2" seed="2" result="n2"/>
<feColorMatrix in="n2" type="matrix" values="0 0 0 0 0  0 0 0 0 0  0 0 0 0 0  1 0 0 0 0" result="n2a"/>
<feComposite in="bl" in2="n2a" operator="arithmetic" k1="0" k2="1" k3="0.9" k4="-0.45" result="m"/>
<feComponentTransfer in="m" result="m2"><feFuncA type="linear" slope="10" intercept="-4.5"/></feComponentTransfer>
<feComposite in="g" in2="m2" operator="in"/>
</filter>
<filter id="ng" x="745" y="730" width="300" height="182" filterUnits="userSpaceOnUse" color-interpolation-filters="sRGB">
<feTurbulence type="fractalNoise" baseFrequency="0.1" numOctaves="2" seed="3" result="a0"/>
<feColorMatrix in="a0" type="matrix" values="1 0 0 0 0  1 0 0 0 0  1 0 0 0 0  0 0 0 0 1" result="a"/>
<feTurbulence type="fractalNoise" baseFrequency="0.35" numOctaves="1" seed="4" result="b0"/>
<feColorMatrix in="b0" type="matrix" values="1 0 0 0 0  1 0 0 0 0  1 0 0 0 0  0 0 0 0 1" result="b"/>
<feComposite in="a" in2="b" operator="arithmetic" k1="0" k2="1.2" k3="0.45" k4="-0.425" result="g1"/>
<feComponentTransfer in="g1" result="g"><feFuncR type="table" tableValues="0.03 0.13 0.25 0.35 0.41 0.48 0.6 0.76 0.9 1 1"/><feFuncG type="table" tableValues="0.03 0.13 0.25 0.35 0.41 0.48 0.6 0.76 0.9 1 1"/><feFuncB type="table" tableValues="0.03 0.13 0.25 0.35 0.41 0.48 0.6 0.76 0.9 1 1"/></feComponentTransfer>
<feGaussianBlur in="SourceAlpha" stdDeviation="2.5" result="bl"/>
<feTurbulence type="fractalNoise" baseFrequency="0.25" numOctaves="2" seed="5" result="n2"/>
<feColorMatrix in="n2" type="matrix" values="0 0 0 0 0  0 0 0 0 0  0 0 0 0 0  1 0 0 0 0" result="n2a"/>
<feComposite in="bl" in2="n2a" operator="arithmetic" k1="0" k2="1" k3="0.9" k4="-0.45" result="m"/>
<feComponentTransfer in="m" result="m2"><feFuncA type="linear" slope="10" intercept="-4.5"/></feComponentTransfer>
<feComposite in="g" in2="m2" operator="in"/>
</filter>
<filter id="ny" x="1365" y="735" width="415" height="177" filterUnits="userSpaceOnUse" color-interpolation-filters="sRGB">
<feTurbulence type="fractalNoise" baseFrequency="0.1" numOctaves="2" seed="21" result="a0"/>
<feColorMatrix in="a0" type="matrix" values="1 0 0 0 0  1 0 0 0 0  1 0 0 0 0  0 0 0 0 1" result="a"/>
<feTurbulence type="fractalNoise" baseFrequency="0.35" numOctaves="1" seed="22" result="b0"/>
<feColorMatrix in="b0" type="matrix" values="1 0 0 0 0  1 0 0 0 0  1 0 0 0 0  0 0 0 0 1" result="b"/>
<feComposite in="a" in2="b" operator="arithmetic" k1="0" k2="1.2" k3="0.45" k4="-0.425" result="g1"/>
<feComponentTransfer in="g1" result="g"><feFuncR type="table" tableValues="0.03 0.13 0.25 0.35 0.41 0.48 0.6 0.76 0.9 1 1"/><feFuncG type="table" tableValues="0.03 0.13 0.25 0.35 0.41 0.48 0.6 0.76 0.9 1 1"/><feFuncB type="table" tableValues="0.03 0.13 0.25 0.35 0.41 0.48 0.6 0.76 0.9 1 1"/></feComponentTransfer>
<feGaussianBlur in="SourceAlpha" stdDeviation="2.5" result="bl"/>
<feTurbulence type="fractalNoise" baseFrequency="0.25" numOctaves="2" seed="8" result="n2"/>
<feColorMatrix in="n2" type="matrix" values="0 0 0 0 0  0 0 0 0 0  0 0 0 0 0  1 0 0 0 0" result="n2a"/>
<feComposite in="bl" in2="n2a" operator="arithmetic" k1="0" k2="1" k3="0.9" k4="-0.45" result="m"/>
<feComponentTransfer in="m" result="m2"><feFuncA type="linear" slope="10" intercept="-4.5"/></feComponentTransfer>
<feComposite in="g" in2="m2" operator="in"/>
</filter>
<clipPath id="cbg"><rect x="711" y="646" width="396" height="264"/></clipPath><clipPath id="cby"><rect x="1342" y="646" width="484" height="264"/></clipPath>
<filter id="bl3" x="-50%" y="-50%" width="200%" height="200%"><feGaussianBlur stdDeviation="5"/></filter>
<filter id="bl1" x="-20%" y="-20%" width="140%" height="140%"><feGaussianBlur stdDeviation="1.2"/></filter>
<clipPath id="cg"><path d="M762 910L761 870L765 842L774 811L790 787L819 766L840 756L878 748L922 752L953 764L995 792L1012 813L1026 842L1031 873L1030 910Z"/></clipPath>
<clipPath id="cy"><path d="M1383 910L1402 872L1423 834L1445 800L1466 778L1502 756L1532 752L1573 751L1605 757L1648 772L1690 793L1716 811L1733 834L1752 864L1763 890L1765 910Z"/></clipPath>
</defs>
<!-- red axial -->
<path filter="url(#nr)" fill="#fff" d="M878 259L888 262L898 268L909 266L923 269L941 272L947 278L950 290L948 301L949 319L942 330L941 342L935 357L929 365L918 371L900 374L886 371L874 364L868 351L859 336L856 322L850 313L852 304L857 298L855 281L864 274L871 265Z"/>
<!-- green coronal -->
<path filter="url(#ng)" fill="#fff" clip-path="url(#cbg)" d="M760 930L761 870L765 842L774 811L790 787L819 766L840 756L878 748L922 752L953 764L995 792L1012 813L1026 842L1031 873L1032 930Z"/>
<g clip-path="url(#cg)">
<g fill="none" stroke-linecap="round" filter="url(#bl3)">
<path d="M846 806L866 842L838 878L840 915" stroke="#696969" stroke-width="26" opacity="0.85"/>
<path d="M938 806L930 842L955 878L945 915" stroke="#696969" stroke-width="26" opacity="0.85"/>
<path d="M972 835L1005 850" stroke="#a8a8a8" stroke-width="18" opacity="0.7"/>
<path d="M800 848L830 858" stroke="#888" stroke-width="14" opacity="0.5"/>
</g>
<path d="M860 832Q880 846 897 847Q915 846 934 832" fill="none" stroke="#c8c8c8" stroke-width="6" opacity="0.6" filter="url(#bl1)"/>
<path d="M869 841Q882 848 897 849Q912 848 927 839L926 847Q912 858 897 859Q882 857 872 850Z" fill="#f6f6f6" filter="url(#bl1)"/>
<path d="M872 851Q884 859 897 860Q912 859 926 848L932 856Q914 872 897 872Q880 871 866 860Z" fill="#646464" filter="url(#bl1)"/>
</g>
<!-- yellow sagittal -->
<path filter="url(#ny)" fill="#fff" clip-path="url(#cby)" d="M1372 930L1402 872L1423 834L1445 800L1466 778L1502 756L1532 752L1573 751L1605 757L1648 772L1690 793L1716 811L1733 834L1752 864L1763 890L1768 930Z"/>
<g clip-path="url(#cy)">
<path d="M1485 858Q1600 800 1718 885" fill="none" stroke="#6a6a6a" stroke-width="20" opacity="0.8" filter="url(#bl3)"/>
<path d="M1547 864Q1562 853 1583 853Q1607 854 1626 860Q1650 870 1665 887L1668 912L1652 912Q1645 895 1630 885Q1605 872 1573 868Q1558 868 1547 873Z" fill="#646464"/>
<path d="M1549 847Q1570 839 1594 840Q1625 843 1648 853Q1672 868 1680 889L1686 912L1667 912Q1666 897 1665 887Q1650 870 1626 860Q1607 854 1583 853Q1562 853 1547 864Z" fill="#eeeeee" filter="url(#bl1)"/>
<path d="M1548 848Q1530 842 1518 856Q1512 872 1522 884Q1534 892 1546 886" fill="none" stroke="#1c1c1c" stroke-width="3.5" opacity="0.75" filter="url(#bl1)"/><path d="M1546 852Q1532 850 1524 862Q1522 876 1534 882Q1544 880 1547 870Z" fill="#7a7a7a" opacity="0.6" filter="url(#bl1)"/>
</g>
</svg>

<div class="vt" style="left:575.5px;top:510px;font-size:14.95px">B: Coil1_137027_C2_ydir1_max_eig</div>
<div class="vt" style="left:575.5px;top:957px;font-size:14.95px">B: Coil1_137027_C2_ydir1_max_eig</div>
<div class="vt" style="left:1250.5px;top:957px;font-size:14.95px">B: Coil1_137027_C2_ydir1_max_eig</div>
<!-- 3D box -->
<svg class="a" style="left:1247px;top:118px" width="673" height="426">
<g fill="none" stroke="#e21ee8" stroke-width="1.2">
<rect x="137.5" y="14.5" width="398" height="396"/>
<rect x="204.5" y="80.5" width="264" height="264"/>
<path d="M137.5 14.5L204.5 80.5M535.5 14.5L468.5 80.5M137.5 410.5L204.5 344.5M535.5 410.5L468.5 344.5"/>
</g>
</svg>

<div class="t" style="left:1575px;top:135px;font-size:26px;color:#fff">S</div>
<div class="t" style="left:1390px;top:318px;font-size:26px;color:#fff">R</div>
<div class="t" style="left:1576px;top:321px;font-size:20px;color:#fff">P</div>
<div class="t" style="left:1758px;top:318px;font-size:26px;color:#fff">L</div>
<div class="t" style="left:1579px;top:501px;font-size:26px;color:#fff">I</div>
<!-- status bar -->
<div class="a" style="left:1888px;top:995px;width:30px;height:29px;border:1px solid #555;border-radius:3px;background:#3a3a3a"></div>
<svg class="a" style="left:1891px;top:997px" width="24" height="24"><circle cx="12" cy="12" r="11.3" fill="#ef3b16"/><path d="M6.5 6.5L17.5 17.5M17.5 6.5L6.5 17.5" stroke="#fff" stroke-width="1.8"/></svg>

</body></html>
